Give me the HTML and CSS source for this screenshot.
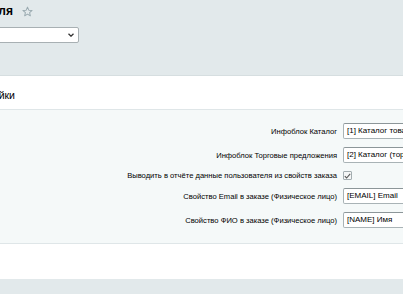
FILE: index.html
```html
<!DOCTYPE html>
<html lang="ru">
<head>
<meta charset="utf-8">
<link rel="stylesheet" href="styles.css">
</head>
<body>
<div class="page">
  <div class="title-row">
    <h1 class="title">Настройки модуля</h1>
    <svg class="star" width="11" height="11" viewBox="0 0 24 24"><path d="M12 2.5l2.9 6.6 7.1.6-5.4 4.7 1.6 7-6.2-3.7-6.2 3.7 1.6-7L2 9.7l7.1-.6z" fill="none" stroke="#9aaab0" stroke-width="2.2" stroke-linejoin="round"/></svg>
  </div>
  <div class="site-select">
    <span class="site-value">s1</span>
    <svg class="chev" width="6" height="4" viewBox="0 0 6 4"><path d="M0.5 0.8L3 3.2 5.5 0.8" fill="none" stroke="#333" stroke-width="1.3"/></svg>
  </div>

  <div class="card">
    <div class="card-head"><span class="card-title">Настройки</span></div>
    <div class="card-body">
      <div class="form">
        <label class="lbl">Инфоблок Каталог</label>
        <div class="ctl"><div class="inp">[1] Каталог товаров</div></div>

        <label class="lbl">Инфоблок Торговые предложения</label>
        <div class="ctl"><div class="inp">[2] Каталог (торговые предложения)</div></div>

        <label class="lbl">Выводить в отчёте данные пользователя из свойств заказа</label>
        <div class="ctl"><span class="chk"><svg width="7" height="6" viewBox="0 0 7 6"><path d="M0.8 3.2L2.6 5 6.2 0.9" fill="none" stroke="#555" stroke-width="1.1"/></svg></span></div>

        <label class="lbl">Свойство Email в заказе (Физическое лицо)</label>
        <div class="ctl"><div class="inp">[EMAIL] Email</div></div>

        <label class="lbl">Свойство ФИО в заказе (Физическое лицо)</label>
        <div class="ctl"><div class="inp">[NAME] Имя</div></div>
      </div>
    </div>
    <div class="card-foot"></div>
  </div>
</div>
</body>
</html>
```

FILE: styles.css
```css
html, body {
  margin: 0;
  padding: 0;
}
body {
  width: 403px;
  height: 294px;
  overflow: hidden;
  background: #e2e9eb;
  font-family: "Liberation Sans", Arial, sans-serif;
  color: #000;
}
.page {
  padding-top: 4px;
}
.title-row {
  display: flex;
  align-items: center;
  height: 15px;
}
.title {
  margin: 0 0 0 -200px;
  width: 213px;
  text-align: right;
  white-space: nowrap;
  overflow: hidden;
  font-size: 12px;
  font-weight: bold;
  line-height: 15px;
  color: #000;
}
.star {
  margin-left: 9px;
  margin-top: -1px;
}
.site-select {
  margin-top: 8px;
  margin-left: -100px;
  width: 179px;
  height: 16px;
  box-sizing: border-box;
  background: #fff;
  border: 1px solid #a8b0b3;
  border-radius: 2px;
  display: flex;
  align-items: center;
  padding: 0 4px;
}
.site-value {
  flex: 1;
  font-size: 8px;
}
.card {
  margin-top: 32px;
  border-top: 1px solid #d6dee0;
}
.card-head {
  background: #fff;
  height: 33px;
  border-bottom: 1px solid #dfe6e8;
  display: flex;
  align-items: center;
}
.card-title {
  display: block;
  margin-left: -100px;
  width: 115px;
  text-align: right;
  white-space: nowrap;
  font-size: 10.5px;
  padding-top: 4px;
}
.card-body {
  background: #f5f9f9;
  padding: 13px 0 15px;
  border-bottom: 1px solid #dfe6e8;
}
.form {
  display: grid;
  grid-template-columns: 337px 1fr;
  column-gap: 6px;
  row-gap: 8px;
  align-items: center;
}
.lbl {
  text-align: right;
  white-space: nowrap;
  font-size: 7.6px;
  color: #000;
}
.ctl {
  display: flex;
  align-items: center;
  overflow: hidden;
}
.inp {
  flex: none;
  width: 120px;
  height: 16px;
  box-sizing: border-box;
  background: #fff;
  border: 1px solid #a9b3b6;
  border-top-color: #8c9699;
  border-radius: 2px;
  font-size: 8px;
  line-height: 14px;
  padding: 0 3px;
  white-space: nowrap;
}
.chk {
  width: 9px;
  height: 9px;
  box-sizing: border-box;
  border: 1px solid #a3adb0;
  background: #f4f6f6;
  border-radius: 1px;
  display: flex;
  align-items: center;
  justify-content: center;
}
.card-foot {
  background: #fff;
  height: 35px;
}
```
